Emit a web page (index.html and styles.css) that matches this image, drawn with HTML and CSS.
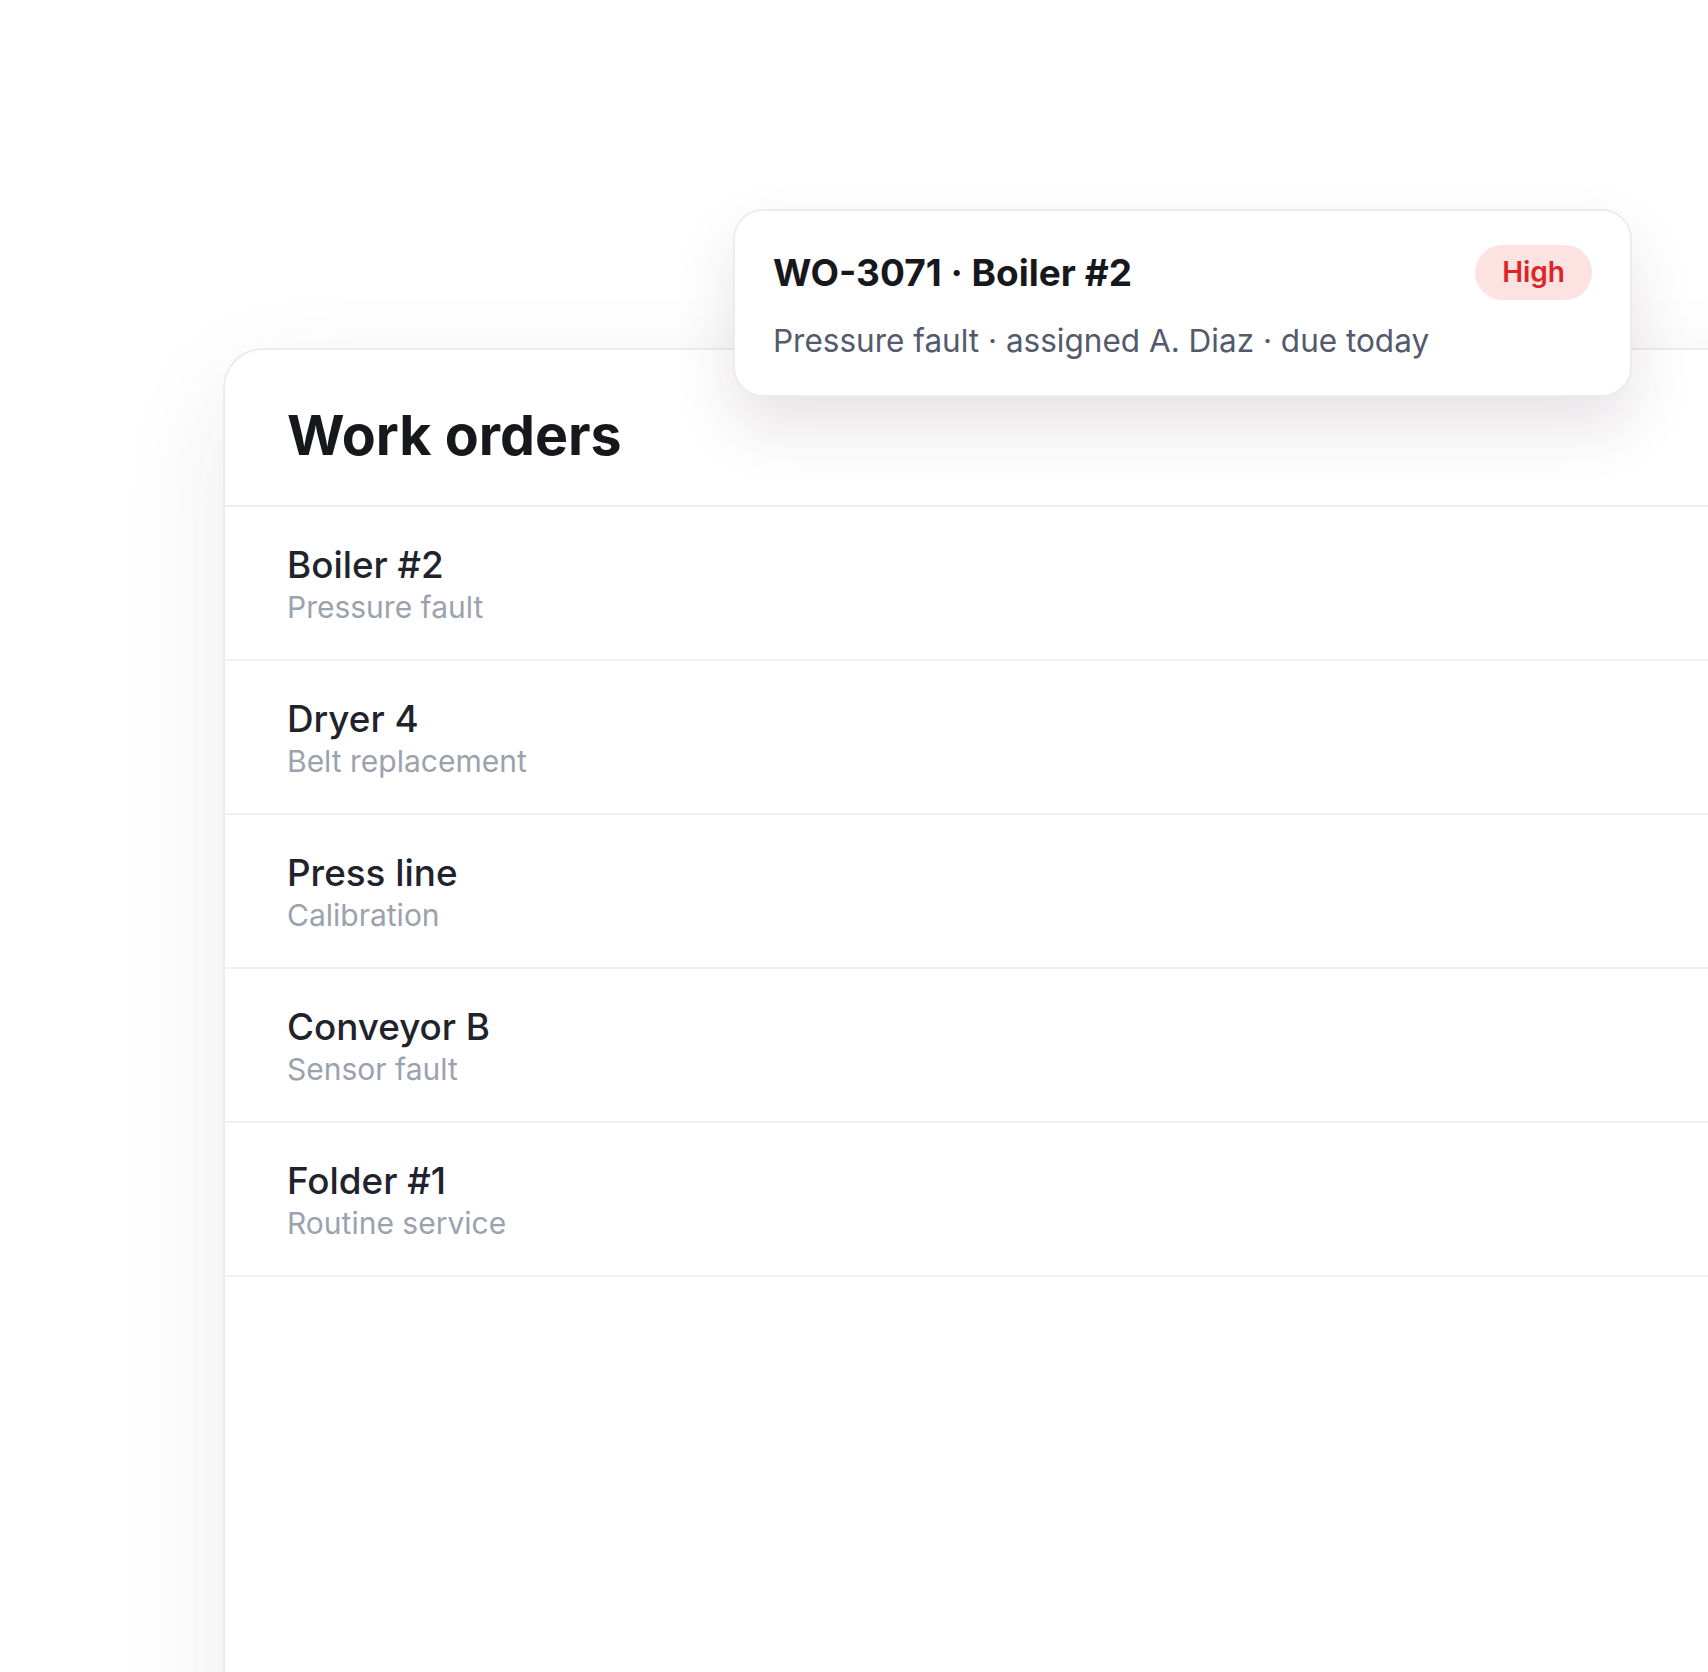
FILE: index.html
```html
<!DOCTYPE html>
<html lang="en">
<head>
  <meta charset="UTF-8" />
  <meta name="viewport" content="width=device-width, initial-scale=1.0"/>
  <title>Work orders</title>
  <link rel="stylesheet" href="styles.css">
</head>
<body>

  <main class="board">
    <section class="panel">
      <header class="panel-head">
        <h1>Work orders</h1>
      </header>
      <ul class="orders">
        <li class="order">
          <div class="order-name">Boiler #2</div>
          <div class="order-note">Pressure fault</div>
        </li>
        <li class="order">
          <div class="order-name">Dryer 4</div>
          <div class="order-note">Belt replacement</div>
        </li>
        <li class="order">
          <div class="order-name">Press line</div>
          <div class="order-note">Calibration</div>
        </li>
        <li class="order">
          <div class="order-name">Conveyor B</div>
          <div class="order-note">Sensor fault</div>
        </li>
        <li class="order">
          <div class="order-name">Folder #1</div>
          <div class="order-note">Routine service</div>
        </li>
      </ul>
    </section>

    <!-- hover card for the selected order -->
    <aside class="peek">
      <div class="peek-top">
        <h2>WO-3071 · Boiler #2</h2>
        <span class="badge high">High</span>
      </div>
      <p class="peek-meta">Pressure fault · assigned A. Diaz · due today</p>
    </aside>
  </main>

</body>
</html>
```

FILE: styles.css
```css
* { box-sizing: border-box; }

html, body {
  margin: 0;
  height: 100%;
}

body {
  font-family: Inter, "Noto Sans", sans-serif;
  background: #fff;
  color: #17181c;
  overflow: hidden;
}

.board {
  position: relative;
  height: 100%;
  padding: 348px 0 0 223px;
}

.panel {
  width: 1600px;
  min-height: 1500px;
  background: #fff;
  border: 2px solid #ececee;
  border-radius: 40px;
  box-shadow: 0 40px 110px rgba(40, 30, 50, 0.09);
}

.panel-head {
  padding: 51px 62px 36px;
  border-bottom: 2px solid #efeff1;
}

.panel-head h1 {
  margin: 0;
  font-size: 55.5px;
  line-height: 68px;
  font-weight: 700;
  color: #17181c;
}

.orders {
  list-style: none;
  margin: 0;
  padding: 0;
}

.order {
  padding: 34px 62px;
  border-bottom: 2px solid #f1f1f3;
}

.order-name {
  font-size: 36.8px;
  line-height: 48px;
  font-weight: 500;
  color: #1f232c;
}

.order-note {
  font-size: 30px;
  line-height: 36px;
  color: #9ba2ae;
}

/* floating detail card */
.peek {
  position: absolute;
  left: 733px;
  top: 209px;
  width: 899px;
  padding: 34px 38px 35px;
  background: #fff;
  border: 2px solid #ececee;
  border-radius: 30px;
  box-shadow: 0 30px 60px rgba(70, 40, 60, 0.13);
}

.peek-top {
  display: flex;
  align-items: center;
  justify-content: space-between;
}

.peek-top h2 {
  margin: 0;
  font-size: 37px;
  line-height: 44px;
  font-weight: 700;
  color: #17181c;
}

.badge {
  height: 55px;
  line-height: 55px;
  padding: 0 27px;
  border-radius: 28px;
  font-size: 28px;
  font-weight: 600;
}

.badge.high {
  background: #fde2e2;
  color: #dc2626;
}

.peek-meta {
  margin: 22px 0 0;
  font-size: 31.5px;
  line-height: 38px;
  color: #525a6b;
}
```
